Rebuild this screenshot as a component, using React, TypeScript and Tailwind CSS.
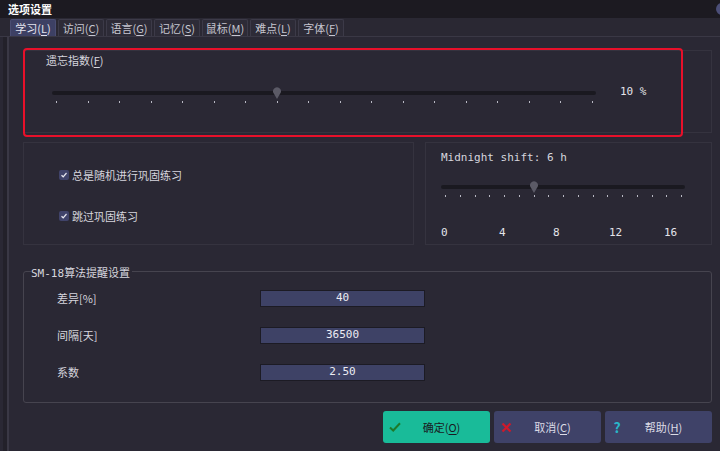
import React from "react";

const cjk = "font-['Noto_Sans_CJK_SC','Noto_Sans',sans-serif]";
const mono = "font-['DejaVu_Sans_Mono','Liberation_Mono',monospace]";

const tabs = ["学习(L)", "访问(C)", "语言(G)", "记忆(S)", "鼠标(M)", "难点(L)", "字体(F)"];

function Label({ text }: { text: string }) {
  // underline the mnemonic letter inside the brackets
  const m = text.match(/^(.*)\((.)\)$/);
  if (!m) return <>{text}</>;
  return (
    <>
      {m[1]}(<span className="underline underline-offset-2">{m[2]}</span>)
    </>
  );
}

function Slider({ width, ticks, value }: { width: number; ticks: number; value: number }) {
  const span = width - 8;
  return (
    <div className="relative" style={{ width, height: 16 }}>
      <div className="absolute left-0 right-0 top-[4px] h-[4px] rounded-full bg-[#1a1920]" />
      <svg
        className="absolute top-0"
        style={{ left: 4 + (span * value) / (ticks - 1) - 5 }}
        width="10"
        height="12"
        viewBox="0 0 10 12"
      >
        <path d="M5 12 L1.2 5.5 A4 4 0 1 1 8.8 5.5 Z" fill="#5b5a66" />
      </svg>
      {Array.from({ length: ticks }).map((_, i) => (
        <div
          key={i}
          className="absolute top-[14px] h-[2px] w-[1px] bg-[#b8b8c4]"
          style={{ left: 4 + (span * i) / (ticks - 1) }}
        />
      ))}
    </div>
  );
}

function Check({ text }: { text: string }) {
  return (
    <div className="flex items-center gap-[3px] text-[11px] text-[#d6d6de]">
      <div className="flex h-[10px] w-[10px] items-center justify-center rounded-[2px] bg-[#40436a]">
        <svg width="8" height="8" viewBox="0 0 8 8">
          <path d="M1.5 4.2 L3.2 5.8 L6.5 2" stroke="#e8e8f0" strokeWidth="1.2" fill="none" />
        </svg>
      </div>
      <span>{text}</span>
    </div>
  );
}

function Field({ label, value }: { label: string; value: string }) {
  return (
    <div className="flex h-[17px] items-center">
      <span className="w-[203px] text-[11px] text-[#d6d6de]">{label}</span>
      <div
        className={`flex h-[17px] w-[165px] items-center justify-center border border-[#1c1b24] bg-[#3e4266] text-[11px] text-[#ececf2] ${mono}`}
      >
        {value}
      </div>
    </div>
  );
}

function Btn({ icon, text, className }: { icon: React.ReactNode; text: string; className: string }) {
  return (
    <div className={`flex h-[32px] items-center rounded-[3px] pl-[4px] text-[11px] ${className}`}>
      <div className="flex w-[16px] items-center justify-center">{icon}</div>
      <div className="flex-1 pr-[10px] text-center">
        <Label text={text} />
      </div>
    </div>
  );
}

export default function App() {
  return (
    <div className={`flex h-[451px] w-[720px] flex-col overflow-hidden bg-[#2a2834] ${cjk}`}>
      <div className="flex h-[18px] shrink-0 items-center justify-between bg-[#1c1a21] pl-[8px]">
        <span className="text-[11px] font-bold text-white">选项设置</span>
        <div className="mr-[-8px] h-[12px] w-[12px] rounded-full bg-[#4b4e78]" />
      </div>

      <div className="flex h-[19px] shrink-0 items-end gap-[2px] border-b border-[#3a3845] bg-[#2a2833] pl-[10px]">
        {tabs.map((t, i) => (
          <div
            key={t}
            className={`flex h-[17px] w-[46px] items-center justify-center rounded-t-[2px] border border-b-0 text-[11px] ${
              i === 0
                ? "border-[#4a4d72] bg-[#3d4064] text-[#e4e4ee]"
                : "border-[#3c3a48] bg-[#2d2b37] text-[#c6c6d0]"
            }`}
          >
            <Label text={t} />
          </div>
        ))}
      </div>

      <div className="flex flex-1 pl-[3px]">
        <div className="w-[4px] bg-[#23212a]" />
        <div className="flex flex-1 flex-col border-l-2 border-[#3a3845] pl-[14px] pr-[8px]">
          <div className="relative mt-[13px] h-[83px] border border-[#35333f]">
            <div className="absolute -left-[1px] -top-[3px] h-[89px] w-[660px] rounded-[4px] border-2 border-[#e8102a]" />
            <div className="pl-[22px] pt-[1px] text-[11px] text-[#d6d6de]">
              <Label text="遗忘指数(F)" />
            </div>
            <div className="mt-[18px] flex items-start pl-[28px]">
              <Slider width={544} ticks={18} value={7} />
              <span className={`ml-[24px] -mt-[3px] text-[11px] text-[#e4e4ea] ${mono}`}>10 %</span>
            </div>
          </div>

          <div className="mt-[9px] flex h-[103px] gap-[11px]">
            <div className="flex w-[391px] flex-col gap-[24px] border border-[#35333f] pl-[35px] pt-[24px]">
              <Check text="总是随机进行巩固练习" />
              <Check text="跳过巩固练习" />
            </div>
            <div className="flex flex-1 flex-col border border-[#35333f] pl-[15px] pt-[7px]">
              <span className={`text-[11px] text-[#d6d6de] ${mono}`}>Midnight shift: 6 h</span>
              <div className="mt-[14px]">
                <Slider width={244} ticks={17} value={6} />
              </div>
              <div className={`mt-[28px] flex text-[11px] text-[#e4e4ea] ${mono}`}>
                <span className="w-[58px]">0</span>
                <span className="w-[54px]">4</span>
                <span className="w-[56px]">8</span>
                <span className="w-[55px]">12</span>
                <span>16</span>
              </div>
            </div>
          </div>

          <div className="relative mt-[26px] h-[132px] rounded-[3px] border border-[#46444f]">
            <span className={`absolute -top-[8px] left-[7px] bg-[#2a2834] pr-[2px] text-[11px] text-[#d6d6de]`}>
              <span className={mono}>SM-18</span>算法提醒设置
            </span>
            <div className="flex flex-col gap-[20px] pl-[33px] pt-[18px]">
              <Field label="差异[%]" value="40" />
              <Field label="间隔[天]" value="36500" />
              <Field label="系数" value="2.50" />
            </div>
          </div>

          <div className="mt-[8px] flex justify-end gap-[4px]">
            <Btn
              className="w-[107px] bg-[#19bb99] text-[#1a1a22]"
              text="确定(O)"
              icon={
                <svg width="12" height="10" viewBox="0 0 12 10">
                  <path d="M1 5.5 L4.2 8.5 L11 1.2" stroke="#1d7a2a" strokeWidth="2" fill="none" />
                </svg>
              }
            />
            <Btn
              className="w-[107px] bg-[#3f4268] text-[#dcdce6]"
              text="取消(C)"
              icon={
                <svg width="11" height="11" viewBox="0 0 11 11">
                  <path d="M1.5 1.5 L9.5 9.5 M9.5 1.5 L1.5 9.5" stroke="#d0182a" strokeWidth="2.2" />
                </svg>
              }
            />
            <Btn
              className="w-[107px] bg-[#3f4268] text-[#dcdce6]"
              text="帮助(H)"
              icon={<span className="text-[14px] font-bold text-[#29b6c8]">?</span>}
            />
          </div>
        </div>
      </div>
    </div>
  );
}
